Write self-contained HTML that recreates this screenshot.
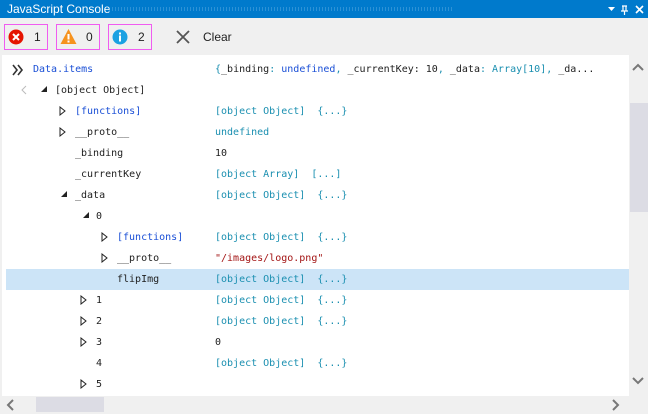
<!DOCTYPE html>
<html><head><meta charset="utf-8"><style>
*{margin:0;padding:0;box-sizing:border-box}
body{width:648px;height:414px;overflow:hidden;background:#f0f0f0;font-family:"Liberation Sans",sans-serif;position:relative}
.title{position:absolute;left:0;top:0;width:648px;height:18px;background:#007acc;color:#fff;font-size:12px}
.title span{position:absolute;left:7px;top:2px}
.dots{position:absolute;left:108px;top:7px;width:345px;height:4px;background-image:radial-gradient(#5aa9e0 0.6px,transparent 0.8px);background-size:3px 2px;}
.btn{position:absolute;top:24px;width:44px;height:26px;border:1px solid #f05cf0;background:#f0f0f0;font-size:12px;color:#1e1e1e}
.btn .n{position:absolute;left:29px;top:5px}
.content{position:absolute;left:2px;top:55px;width:627px;height:341px;background:#fff}
.row{position:absolute;left:0;width:627px;height:21px;font-family:"DejaVu Sans Mono","Liberation Mono",monospace;font-size:10px;color:#1e1e1e}
.row span{position:absolute;top:5px;white-space:pre}
.row span span{position:static}
.row svg{top:5px!important}
.hl{background:#cce4f7}
.k{color:#1a4fd6}.v{color:#1a8fb0}.s{color:#a31515}
.vs{position:absolute;left:629px;top:55px;width:19px;height:341px;background:#f0f0f0}
.hs{position:absolute;left:2px;top:396px;width:627px;height:17px;background:#f0f0f0}
</style></head><body>
<div class="title"><span>JavaScript Console</span><div class="dots"></div>
<svg style="position:absolute;left:608px;top:5px" width="40" height="10"><path d="M0 2h7l-3.5 4z" fill="#fff"/><path d="M14 1h5M15 1v5M18 1v5M13 6h7M16.5 6v4" stroke="#fff" stroke-width="1.2" fill="none"/><path d="M28 1l7 7M35 1l-7 7" stroke="#fff" stroke-width="1.6"/></svg></div>

<div class="btn" style="left:4px"><svg style="position:absolute;left:3px;top:4px" width="16" height="16"><circle cx="8" cy="8" r="7.5" fill="#e51400"/><path d="M5 5l6 6M11 5l-6 6" stroke="#fff" stroke-width="2"/></svg><span class="n">1</span></div>
<div class="btn" style="left:56px"><svg style="position:absolute;left:3px;top:3px" width="17" height="17"><path d="M8.5 1L16.5 16H0.5z" fill="#f6921e"/><path d="M8.5 6v5.5" stroke="#fff" stroke-width="2"/><rect x="7.5" y="12.5" width="2" height="2" fill="#fff"/></svg><span class="n">0</span></div>
<div class="btn" style="left:108px"><svg style="position:absolute;left:3px;top:4px" width="16" height="16"><circle cx="8" cy="8" r="7.5" fill="#1ba1e2"/><rect x="7" y="3.5" width="2" height="2" fill="#fff"/><rect x="7" y="6.5" width="2" height="6" fill="#fff"/></svg><span class="n">2</span></div>
<svg style="position:absolute;left:176px;top:30px" width="14" height="14"><path d="M1 1l12 12M13 1l-12 12" stroke="#555" stroke-width="1.8"/></svg>
<div style="position:absolute;left:203px;top:30px;font-size:12px;color:#1e1e1e">Clear</div>

<div class="content">
<div class="row" style="top:4px"><svg style="position:absolute;left:10px" width="12" height="12"><path d="M1 1l4 5-4 5M6 1l4 5-4 5" stroke="#333" stroke-width="1.6" fill="none"/></svg><span class="k" style="left:31px">Data.items</span><span style="left:213px"><span class="v">{</span>_binding<span class="v">:</span> <span class="k">undefined</span><span class="v">,</span> _currentKey: 10<span class="v">,</span> _data<span class="v">:</span> <span class="v">Array[10]</span><span class="v">,</span> _da...</span></div>
<div class="row" style="top:25px"><svg style="position:absolute;left:18px" width="8" height="10"><path d="M6 1L2 5l4 4" stroke="#bbb" fill="none"/></svg><svg style="position:absolute;left:38px" width="8" height="8"><path d="M7 1v6H1z" fill="#222"/></svg><span style="left:53px">[object Object]</span></div>

<div class="row" style="top:46px"><svg style="position:absolute;left:57px" width="8" height="10"><path d="M1 1l5 4-5 4z" stroke="#222" fill="none"/></svg><span class="k" style="left:73px">[functions]</span><span class="v" style="left:213px">[object Object]  {...}</span></div>
<div class="row" style="top:67px"><svg style="position:absolute;left:57px" width="8" height="10"><path d="M1 1l5 4-5 4z" stroke="#222" fill="none"/></svg><span style="left:73px">__proto__</span><span class="v" style="left:213px">undefined</span></div>
<div class="row" style="top:88px"><span style="left:73px">_binding</span><span style="left:213px">10</span></div>
<div class="row" style="top:109px"><span style="left:73px">_currentKey</span><span class="v" style="left:213px">[object Array]  [...]</span></div>
<div class="row" style="top:130px"><svg style="position:absolute;left:58px" width="8" height="8"><path d="M7 1v6H1z" fill="#222"/></svg><span style="left:73px">_data</span><span class="v" style="left:213px">[object Object]  {...}</span></div>
<div class="row" style="top:151px"><svg style="position:absolute;left:80px" width="8" height="8"><path d="M7 1v6H1z" fill="#222"/></svg><span style="left:94px">0</span></div>
<div class="row" style="top:172px"><svg style="position:absolute;left:99px" width="8" height="10"><path d="M1 1l5 4-5 4z" stroke="#222" fill="none"/></svg><span class="k" style="left:115px">[functions]</span><span class="v" style="left:213px">[object Object]  {...}</span></div>
<div class="row" style="top:193px"><svg style="position:absolute;left:99px" width="8" height="10"><path d="M1 1l5 4-5 4z" stroke="#222" fill="none"/></svg><span style="left:115px">__proto__</span><span class="s" style="left:213px">"/images/logo.png"</span></div>
<div class="row hl" style="top:214px;left:4px;width:623px"><span style="left:111px">flipImg</span><span class="v" style="left:209px">[object Object]  {...}</span></div>
<div class="row" style="top:235px"><svg style="position:absolute;left:78px" width="8" height="10"><path d="M1 1l5 4-5 4z" stroke="#222" fill="none"/></svg><span style="left:94px">1</span><span class="v" style="left:213px">[object Object]  {...}</span></div>
<div class="row" style="top:256px"><svg style="position:absolute;left:78px" width="8" height="10"><path d="M1 1l5 4-5 4z" stroke="#222" fill="none"/></svg><span style="left:94px">2</span><span class="v" style="left:213px">[object Object]  {...}</span></div>
<div class="row" style="top:277px"><svg style="position:absolute;left:78px" width="8" height="10"><path d="M1 1l5 4-5 4z" stroke="#222" fill="none"/></svg><span style="left:94px">3</span><span style="left:213px">0</span></div>
<div class="row" style="top:298px"><span style="left:94px">4</span><span class="v" style="left:213px">[object Object]  {...}</span></div>
<div class="row" style="top:319px"><svg style="position:absolute;left:78px" width="8" height="10"><path d="M1 1l5 4-5 4z" stroke="#222" fill="none"/></svg><span style="left:94px">5</span></div>
</div>

<div class="vs"><svg style="position:absolute;left:3px;top:8px" width="12" height="8"><path d="M1 7l5-5 5 5" stroke="#777" stroke-width="2" fill="none"/></svg>
<div style="position:absolute;left:1px;top:48px;width:18px;height:109px;background:#dcdce4"></div>
<svg style="position:absolute;left:3px;top:322px" width="12" height="8"><path d="M1 1l5 5 5-5" stroke="#777" stroke-width="2" fill="none"/></svg></div>
<div class="hs"><svg style="position:absolute;left:4px;top:3px" width="8" height="12"><path d="M7 1L2 6l5 5" stroke="#777" stroke-width="2" fill="none"/></svg>
<div style="position:absolute;left:34px;top:1px;width:68px;height:15px;background:#dcdce4"></div>
<svg style="position:absolute;left:610px;top:3px" width="8" height="12"><path d="M1 1l5 5-5 5" stroke="#777" stroke-width="2" fill="none"/></svg></div>
</body></html>
